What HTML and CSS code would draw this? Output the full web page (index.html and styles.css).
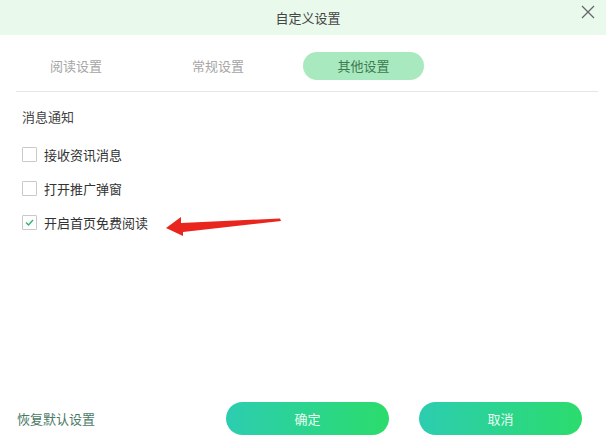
FILE: index.html
```html
<!DOCTYPE html>
<html lang="zh-CN">
<head>
  <meta charset="UTF-8">
  <title>自定义设置</title>
  <link rel="stylesheet" href="styles.css">
</head>
<body>
  <div class="dialog">
    <!-- 标题栏 -->
    <div class="dialog-header">
      <span class="dialog-title">自定义设置</span>
      <svg class="close-btn" width="14" height="14" viewBox="0 0 14 14">
        <path d="M1 1 L13 13 M13 1 L1 13" stroke="#666" stroke-width="1.3" fill="none"/>
      </svg>
    </div>

    <!-- 标签页 -->
    <div class="tabs">
      <div class="tab">阅读设置</div>
      <div class="tab">常规设置</div>
      <div class="tab active">其他设置</div>
    </div>

    <!-- 设置内容 -->
    <div class="content">
      <div class="group-title">消息通知</div>
      <label class="option">
        <span class="check"></span>
        接收资讯消息
      </label>
      <label class="option">
        <span class="check"></span>
        打开推广弹窗
      </label>
      <label class="option">
        <span class="check checked">
          <svg width="11" height="11" viewBox="0 0 11 11">
            <path d="M2 5.5 L4.5 8 L9 3" stroke="#33b56f" stroke-width="1.4" fill="none"/>
          </svg>
        </span>
        开启首页免费阅读
      </label>
    </div>

    <!-- 底部按钮 -->
    <div class="footer">
      <span class="reset">恢复默认设置</span>
      <div class="buttons">
        <button class="btn">确定</button>
        <button class="btn">取消</button>
      </div>
    </div>

    <!-- 标注箭头 -->
    <svg class="arrow" width="130" height="30" viewBox="160 212 130 30">
      <polygon points="166,228 181,217 181,223 280,218.5 281,221 183,232 183,236" fill="#e9261e"/>
    </svg>
  </div>
</body>
</html>
```

FILE: styles.css
```css
body {
  margin: 0;
  padding: 0;
  background: #fff;
  font-family: "Noto Sans CJK SC", "Noto Sans", sans-serif;
  font-size: 13px;
  color: #333;
}

.dialog {
  position: relative;
  width: 606px;
  height: 437px;
  display: flex;
  flex-direction: column;
  background: #fff;
}

/* 标题栏 */
.dialog-header {
  position: relative;
  height: 35px;
  background: #e9f9ec;
  display: flex;
  align-items: center;
  justify-content: center;
}

.dialog-title {
  font-size: 13px;
  color: #444;
  margin-left: 10px;
}

.close-btn {
  position: absolute;
  right: 11px;
  top: 5px;
}

/* 标签页 */
.tabs {
  display: flex;
  align-items: center;
  margin: 0 8px 0 16px;
  padding: 17px 0 11px 0;
  border-bottom: 1px solid #e6e6e6;
}

.tab {
  width: 121px;
  height: 28px;
  line-height: 28px;
  color: #a5a5a5;
  margin-right: 22px;
  text-indent: 34px;
}

.tab:first-child {
  width: 120px;
}

.tab.active {
  margin-left: 2px;
  background: #a9e9bf;
  color: #3d7a4f;
  border-radius: 14px;
  text-indent: 0;
  text-align: center;
}

/* 设置内容 */
.content {
  flex: 1;
  padding: 15px 0 0 22px;
}

.group-title {
  color: #444;
  height: 20px;
  line-height: 20px;
  margin-bottom: 19px;
}

.option {
  display: flex;
  align-items: center;
  height: 16px;
  margin-bottom: 18px;
  color: #333;
}

.option:last-child {
  margin-top: 1px;
}

.check {
  width: 13px;
  height: 13px;
  border: 1px solid #c9c9c9;
  border-radius: 1px;
  margin-right: 7px;
  display: flex;
  align-items: center;
  justify-content: center;
  background: #fff;
}

/* 底部 */
.footer {
  display: flex;
  align-items: center;
  justify-content: space-between;
  padding: 0 24px 1px 17px;
  height: 36px;
}

.reset {
  color: #4a7a66;
}

.buttons {
  display: flex;
  gap: 30px;
}

.btn {
  width: 163px;
  height: 33px;
  border: none;
  border-radius: 17px;
  background: linear-gradient(90deg, #2ccdb0, #2bdc6c);
  color: #e9fbf2;
  font-family: inherit;
  font-size: 13px;
}

.arrow {
  position: absolute;
  left: 160px;
  top: 212px;
}
```
